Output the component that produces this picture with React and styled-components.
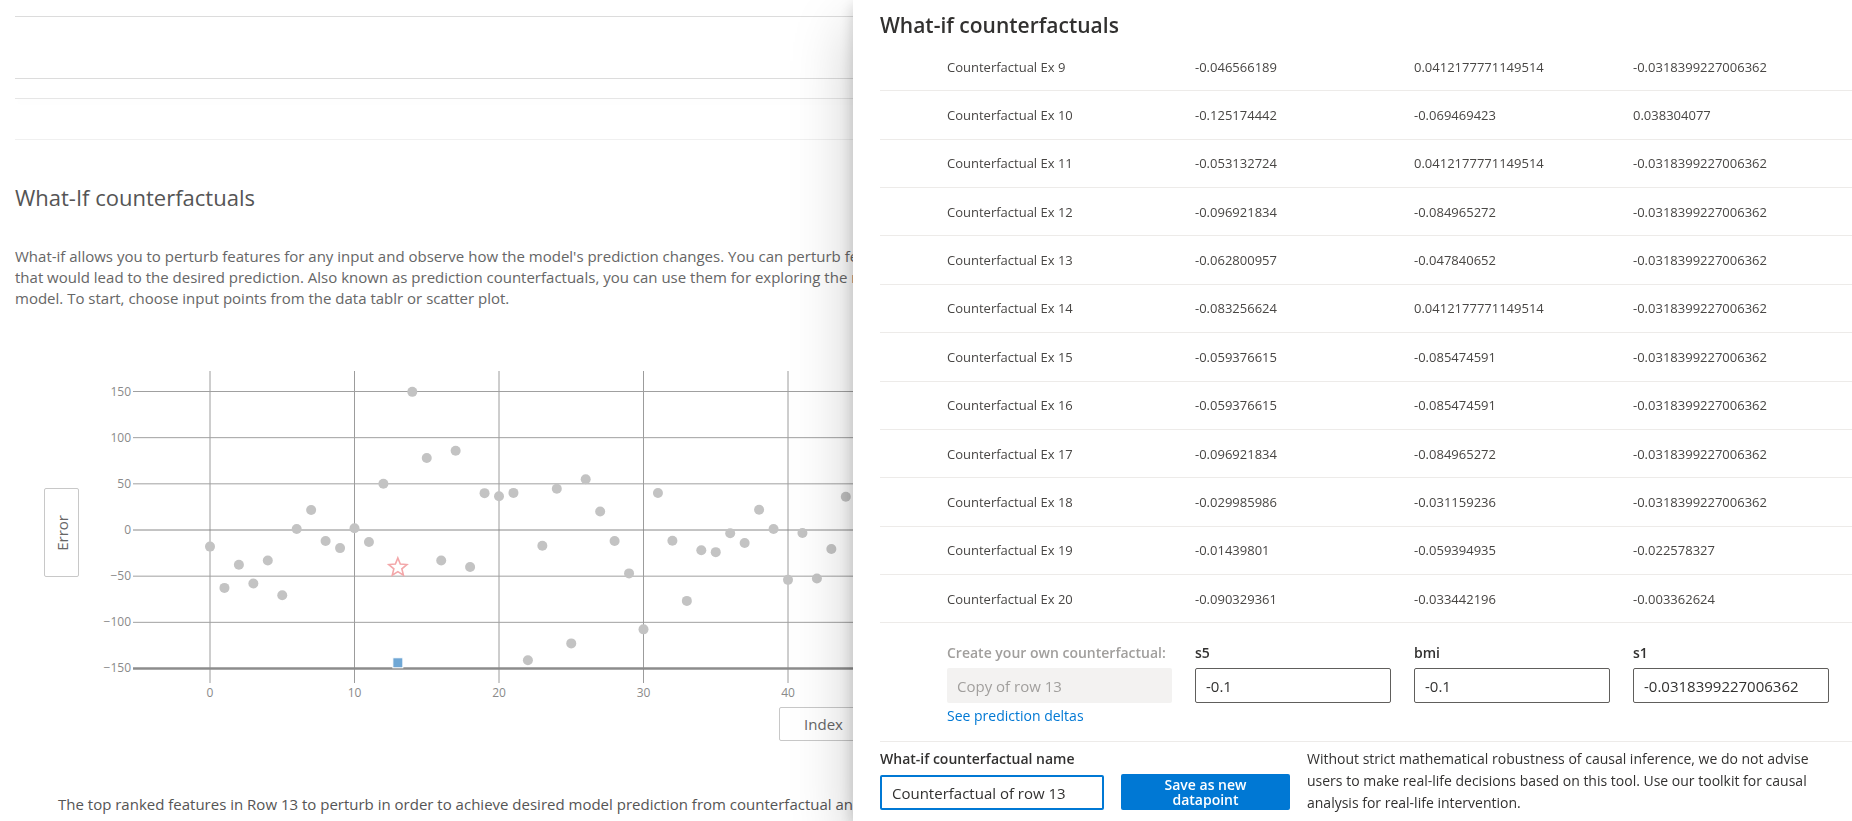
import React from 'react';
import styled, { createGlobalStyle } from 'styled-components';

const GlobalStyle = createGlobalStyle`
  html, body {
    margin: 0;
    padding: 0;
    background: #fff;
  }
  body {
    font-family: "Open Sans", "Liberation Sans", sans-serif;
    overflow: hidden;
  }
  * {
    box-sizing: border-box;
  }
`;

// ---- background page -------------------------------------------------------

const Page = styled.div`
  height: 821px;
  overflow: hidden;
  padding: 0 15px;
`;

const Rule = styled.div`
  margin-top: ${p => p.$gap}px;
  border-top: 1px solid ${p => p.$color || '#dcdcdc'};
  ${p => p.$shadow && 'box-shadow: 0 3px 8px rgba(0, 0, 0, 0.06);'}
`;

const SectionTitle = styled.h2`
  margin: 43px 0 0;
  font-size: 22px;
  font-weight: 400;
  line-height: 28px;
  color: #555;
`;

const Intro = styled.p`
  margin: 35px 0 0;
  font-size: 15px;
  line-height: 21px;
  color: #666;
  white-space: nowrap;
`;

const ChartRow = styled.div`
  display: flex;
  align-items: flex-start;
  margin: 56px 0 0 29px;
`;

const AxisButton = styled.button`
  display: flex;
  align-items: center;
  justify-content: center;
  background: #fff;
  border: 1px solid #c8c8c8;
  border-radius: 2px;
  color: #666;
  font-family: "Open Sans", sans-serif;
  font-size: 15px;
  padding: 0;
  width: ${p => (p.$vertical ? '35px' : '89px')};
  height: ${p => (p.$vertical ? '89px' : '34px')};
  margin: ${p => (p.$vertical ? '123px 0 0 0' : '2px 0 0 764px')};
  span {
    ${p => p.$vertical && 'writing-mode: vertical-rl; transform: rotate(180deg);'}
  }
`;

const Plot = styled.svg`
  display: block;
  margin-left: 21px;
  flex: none;
  font-family: "Open Sans", sans-serif;
`;

const Footnote = styled.p`
  margin: 53px 0 0 43px;
  font-size: 15px;
  line-height: 21px;
  color: #555;
  white-space: nowrap;
`;

// ---- panel ------------------------------------------------------------------

const Panel = styled.aside`
  position: fixed;
  top: 0;
  right: 0;
  bottom: 0;
  width: 999px;
  padding-left: 27px;
  background: #fff;
  box-shadow: 0 25.6px 57.6px 0 rgba(0, 0, 0, 0.22), 0 4.8px 14.4px 0 rgba(0, 0, 0, 0.18);
  color: #323130;
  display: flex;
  flex-direction: column;
`;

const PanelTitle = styled.h1`
  margin: 11px 0 0;
  font-size: 21px;
  font-weight: 600;
  line-height: 28px;
  color: #323130;
`;

const List = styled.div`
  margin-top: 4px;
`;

const Row = styled.div`
  display: grid;
  grid-template-columns: 67px 248px 219px 219px 1fr;
  align-items: center;
  height: 48.36px;
  border-bottom: 1px solid #edebe9;
  font-size: 13px;
  color: #484644;
`;

const Form = styled.div`
  display: grid;
  grid-template-columns: 248px 219px 219px 219px;
  grid-template-rows: 20px 35px 20px;
  row-gap: 5px;
  padding: 20px 0 0 67px;
  & > :nth-child(n + 9) {
    margin-top: -2px;
  }
`;

const FieldLabel = styled.div`
  font-size: 14px;
  font-weight: 600;
  line-height: 20px;
  color: ${p => (p.$muted ? '#a19f9d' : '#323130')};
  white-space: nowrap;
`;

const TextInput = styled.input`
  width: ${p => (p.$wide ? '225px' : '196px')};
  height: 35px;
  padding: 0 10px;
  font-family: "Open Sans", sans-serif;
  font-size: 15px;
  color: #323130;
  background: #fff;
  border: ${p => (p.$focused ? '2px solid #0078d4' : '1px solid #605e5c')};
  border-radius: 2px;
  outline: none;
  &:disabled {
    border: none;
    background: #f3f2f1;
    color: #a19f9d;
  }
`;

const Link = styled.a`
  font-size: 14px;
  line-height: 20px;
  color: #0078d4;
  text-decoration: none;
  white-space: nowrap;
`;

const Footer = styled.div`
  display: flex;
  align-items: flex-start;
  gap: 17px;
  margin-top: 13px;
  padding-top: 7px;
  border-top: 1px solid #edebe9;
`;

const NameField = styled.div`
  display: flex;
  flex-direction: column;
  gap: 6px;
  width: 224px;
`;

const SaveButton = styled.button`
  width: 169px;
  height: 36px;
  margin-top: 25px;
  border: none;
  border-radius: 2px;
  background: #0078d4;
  color: #fff;
  font-family: "Open Sans", sans-serif;
  font-size: 14px;
  font-weight: 600;
  line-height: 15px;
`;

const Disclaimer = styled.p`
  margin: -1px 0 0;
  font-size: 14px;
  line-height: 21.6px;
  color: #323130;
  white-space: nowrap;
`;

// ---- data -------------------------------------------------------------------

const rows = [
  ['Counterfactual Ex 9', '-0.046566189', '0.0412177771149514', '-0.0318399227006362'],
  ['Counterfactual Ex 10', '-0.125174442', '-0.069469423', '0.038304077'],
  ['Counterfactual Ex 11', '-0.053132724', '0.0412177771149514', '-0.0318399227006362'],
  ['Counterfactual Ex 12', '-0.096921834', '-0.084965272', '-0.0318399227006362'],
  ['Counterfactual Ex 13', '-0.062800957', '-0.047840652', '-0.0318399227006362'],
  ['Counterfactual Ex 14', '-0.083256624', '0.0412177771149514', '-0.0318399227006362'],
  ['Counterfactual Ex 15', '-0.059376615', '-0.085474591', '-0.0318399227006362'],
  ['Counterfactual Ex 16', '-0.059376615', '-0.085474591', '-0.0318399227006362'],
  ['Counterfactual Ex 17', '-0.096921834', '-0.084965272', '-0.0318399227006362'],
  ['Counterfactual Ex 18', '-0.029985986', '-0.031159236', '-0.0318399227006362'],
  ['Counterfactual Ex 19', '-0.01439801', '-0.059394935', '-0.022578327'],
  ['Counterfactual Ex 20', '-0.090329361', '-0.033442196', '-0.003362624'],
];

const errors = [
  -18, -62.7, -37.7, -58, -33, -70.6, 1, 21.7, -12, -19.6, 1.8, -13, 50, null,
  149.6, 77.9, -33, 85.9, -40, 39.9, 36.6, 40.2, -141, -17, 44.6, -122.8, 55,
  20, -12, -47, -107.6, 40, -11.6, -76.8, -22, -24, -3.6, -14, 22, 1, -54,
  -3.3, -52.5, -20.6, 36,
];

const OX = 110;
const SX = 14.45;
const OY = 165;
const SY = 0.9233;
const px = i => OX + i * SX;
const py = v => OY - v * SY;

const starPath = (cx, cy, ro, ri) => {
  const pts = [];
  for (let k = 0; k < 10; k++) {
    const r = k % 2 ? ri : ro;
    const a = -Math.PI / 2 + (k * Math.PI) / 5;
    pts.push(`${(cx + r * Math.cos(a)).toFixed(2)},${(cy + r * Math.sin(a)).toFixed(2)}`);
  }
  return `M${pts.join('L')}Z`;
};

function ScatterPlot() {
  const yTicks = [150, 100, 50, 0, -50, -100, -150];
  const xTicks = [0, 10, 20, 30, 40, 50];
  return (
    <Plot width="760" height="340" viewBox="0 0 760 340">
      {xTicks.map(t => (
        <line key={'v' + t} x1={px(t)} x2={px(t)} y1="6" y2="318" stroke="#9c9c9c" strokeWidth="1" />
      ))}
      {yTicks.map(t => (
        <line
          key={'h' + t}
          x1="33"
          x2="760"
          y1={py(t)}
          y2={py(t)}
          stroke={t === -150 ? '#8c8c8c' : t === 0 ? '#888' : '#a0a0a0'}
          strokeWidth={t === -150 ? 2.5 : 1}
        />
      ))}
      {yTicks.map(t => (
        <text key={'yl' + t} x="31" y={py(t) + 4} textAnchor="end" fontSize="12" fill="#8a8a8a">
          {t < 0 ? `\u2212${-t}` : t}
        </text>
      ))}
      {xTicks.map(t => (
        <text key={'xl' + t} x={px(t)} y="332" textAnchor="middle" fontSize="12" fill="#8a8a8a">
          {t}
        </text>
      ))}
      {errors.map((v, i) =>
        v === null ? null : <circle key={i} cx={px(i)} cy={py(v)} r="5" fill="#c3c3c3" />
      )}
      <path d={starPath(px(13), py(-40.6), 9.5, 4.2)} fill="#fff" stroke="#f3a7a9" strokeWidth="1.6" />
      <rect x={px(13) - 5} y={py(-143.8) - 5} width="10" height="10" fill="#6fa7d5" stroke="#fff" strokeWidth="1" />
    </Plot>
  );
}

export default function App() {
  return (
    <>
      <GlobalStyle />
      <Page>
        <Rule $gap={16} />
        <Rule $gap={61} />
        <Rule $gap={19} $color="#e6e6e6" $shadow />
        <Rule $gap={40} $color="#f0f0f0" />
        <SectionTitle>What-If counterfactuals</SectionTitle>
        <Intro>
          What-if allows you to perturb features for any input and observe how the model's prediction changes. You can perturb features based on your intuition or find the minimum changes
          <br />
          that would lead to the desired prediction. Also known as prediction counterfactuals, you can use them for exploring the relationships between input features and the predictions of the
          <br />
          model. To start, choose input points from the data tablr or scatter plot.
        </Intro>
        <ChartRow>
          <AxisButton $vertical>
            <span>Error</span>
          </AxisButton>
          <ScatterPlot />
        </ChartRow>
        <AxisButton>
          <span>Index</span>
        </AxisButton>
        <Footnote>
          The top ranked features in Row 13 to perturb in order to achieve desired model prediction from counterfactual analysis.
        </Footnote>
      </Page>

      <Panel>
        <PanelTitle>What-if counterfactuals</PanelTitle>
        <List>
          {rows.map(r => (
            <Row key={r[0]}>
              <span />
              {r.map(c => (
                <span key={c}>{c}</span>
              ))}
            </Row>
          ))}
        </List>
        <Form>
          <FieldLabel $muted>Create your own counterfactual:</FieldLabel>
          <FieldLabel>s5</FieldLabel>
          <FieldLabel>bmi</FieldLabel>
          <FieldLabel>s1</FieldLabel>
          <TextInput $wide disabled defaultValue="Copy of row 13" />
          <TextInput defaultValue="-0.1" />
          <TextInput defaultValue="-0.1" />
          <TextInput defaultValue="-0.0318399227006362" />
          <Link href="#">See prediction deltas</Link>
        </Form>
        <Footer>
          <NameField>
            <FieldLabel>What-if counterfactual name</FieldLabel>
            <TextInput $focused $wide style={{ width: 224 }} defaultValue="Counterfactual of row 13" />
          </NameField>
          <SaveButton>
            Save as new
            <br />
            datapoint
          </SaveButton>
          <Disclaimer>
            Without strict mathematical robustness of causal inference, we do not advise
            <br />
            users to make real-life decisions based on this tool. Use our toolkit for causal
            <br />
            analysis for real-life intervention.
          </Disclaimer>
        </Footer>
      </Panel>
    </>
  );
}
